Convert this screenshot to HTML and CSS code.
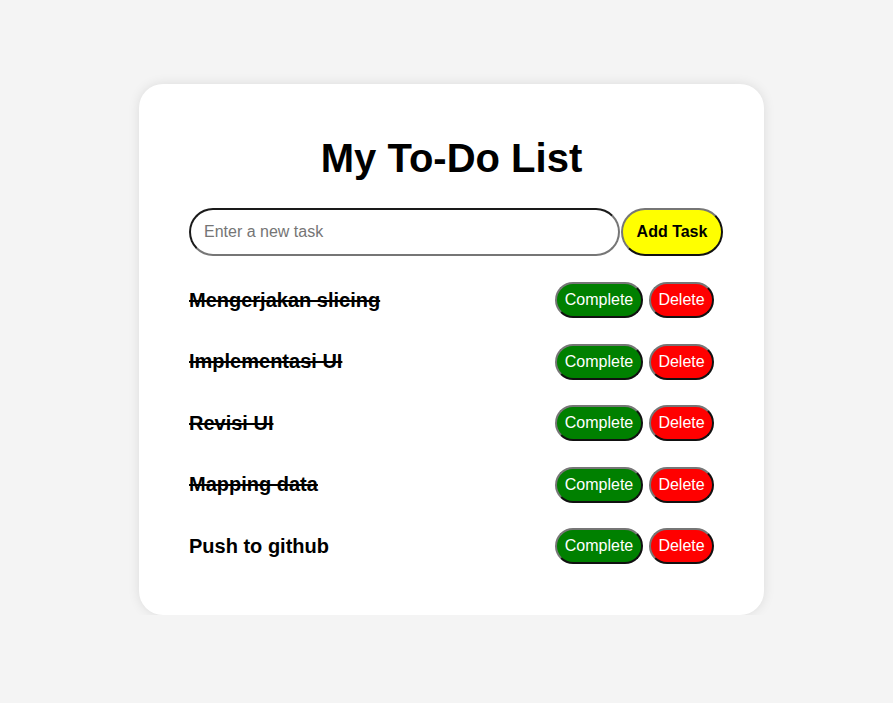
FILE: index.html
```html
<!DOCTYPE html>
<html lang="en">
<head>
<meta charset="utf-8">
<title>My To-Do List</title>
<link rel="stylesheet" href="styles.css">
</head>
<body>
<div class="card">
  <h1 class="title">My To-Do List</h1>
  <form class="add-form">
    <input class="task-input" type="text" placeholder="Enter a new task">
    <button class="add-btn" type="button">Add Task</button>
  </form>
  <ul class="task-list">
    <li class="task">
      <span class="task-text done">Mengerjakan slicing</span>
      <div class="actions"><button class="btn complete" type="button">Complete</button><button class="btn delete" type="button">Delete</button></div>
    </li>
    <li class="task">
      <span class="task-text done">Implementasi UI</span>
      <div class="actions"><button class="btn complete" type="button">Complete</button><button class="btn delete" type="button">Delete</button></div>
    </li>
    <li class="task">
      <span class="task-text done">Revisi UI</span>
      <div class="actions"><button class="btn complete" type="button">Complete</button><button class="btn delete" type="button">Delete</button></div>
    </li>
    <li class="task">
      <span class="task-text done">Mapping data</span>
      <div class="actions"><button class="btn complete" type="button">Complete</button><button class="btn delete" type="button">Delete</button></div>
    </li>
    <li class="task">
      <span class="task-text">Push to github</span>
      <div class="actions"><button class="btn complete" type="button">Complete</button><button class="btn delete" type="button">Delete</button></div>
    </li>
  </ul>
</div>
</body>
</html>
```
FILE: styles.css
```css
* { box-sizing: border-box; }

body {
  margin: 0;
  background: #f4f4f4;
  font-family: "Liberation Sans", Arial, sans-serif;
  color: #000;
}

.card {
  width: 625px;
  margin: 84px 0 0 139px;
  padding: 51px 50px 51px;
  background: #fff;
  border-radius: 24px;
  box-shadow: 0 0 12px rgba(0, 0, 0, 0.1);
}

.title {
  margin: 0 0 27px;
  font-size: 40px;
  font-weight: bold;
  text-align: center;
  line-height: 46px;
}

.add-form {
  display: flex;
  gap: 1px;
  margin: 0 0 26px;
}

.task-input {
  flex: 0 0 431px;
  height: 48px;
  padding: 0 13px;
  font-family: "Liberation Sans", Arial, sans-serif;
  font-size: 16px;
  border: 2px solid;
  border-color: #1a1a1a #767676 #767676 #1a1a1a;
  border-radius: 24px;
  outline: none;
}

.task-input::placeholder { color: #757575; }

.add-btn {
  flex: 0 0 102px;
  height: 48px;
  padding: 0;
  font-family: "Liberation Sans", Arial, sans-serif;
  font-size: 16px;
  font-weight: bold;
  color: #000;
  background: #ffff00;
  border: 2px solid;
  border-color: #767676 #111 #111 #767676;
  border-radius: 24px;
}

.task-list {
  list-style: none;
  margin: 0;
  padding: 0;
  display: flex;
  flex-direction: column;
  gap: 25.5px;
}

.task {
  display: flex;
  align-items: center;
  justify-content: space-between;
  height: 36px;
}

.task-text {
  font-size: 20px;
  font-weight: bold;
}

.task-text.done { text-decoration: line-through; }

.actions {
  display: flex;
  gap: 6px;
}

.btn {
  height: 36px;
  padding: 0;
  font-family: "Liberation Sans", Arial, sans-serif;
  font-size: 16px;
  color: #fff;
  border: 2px solid;
  border-color: #767676 #111 #111 #767676;
  border-radius: 18px;
}

.btn.complete { width: 88px; background: #008000; }
.btn.delete { width: 65px; background: #ff0000; }
```
